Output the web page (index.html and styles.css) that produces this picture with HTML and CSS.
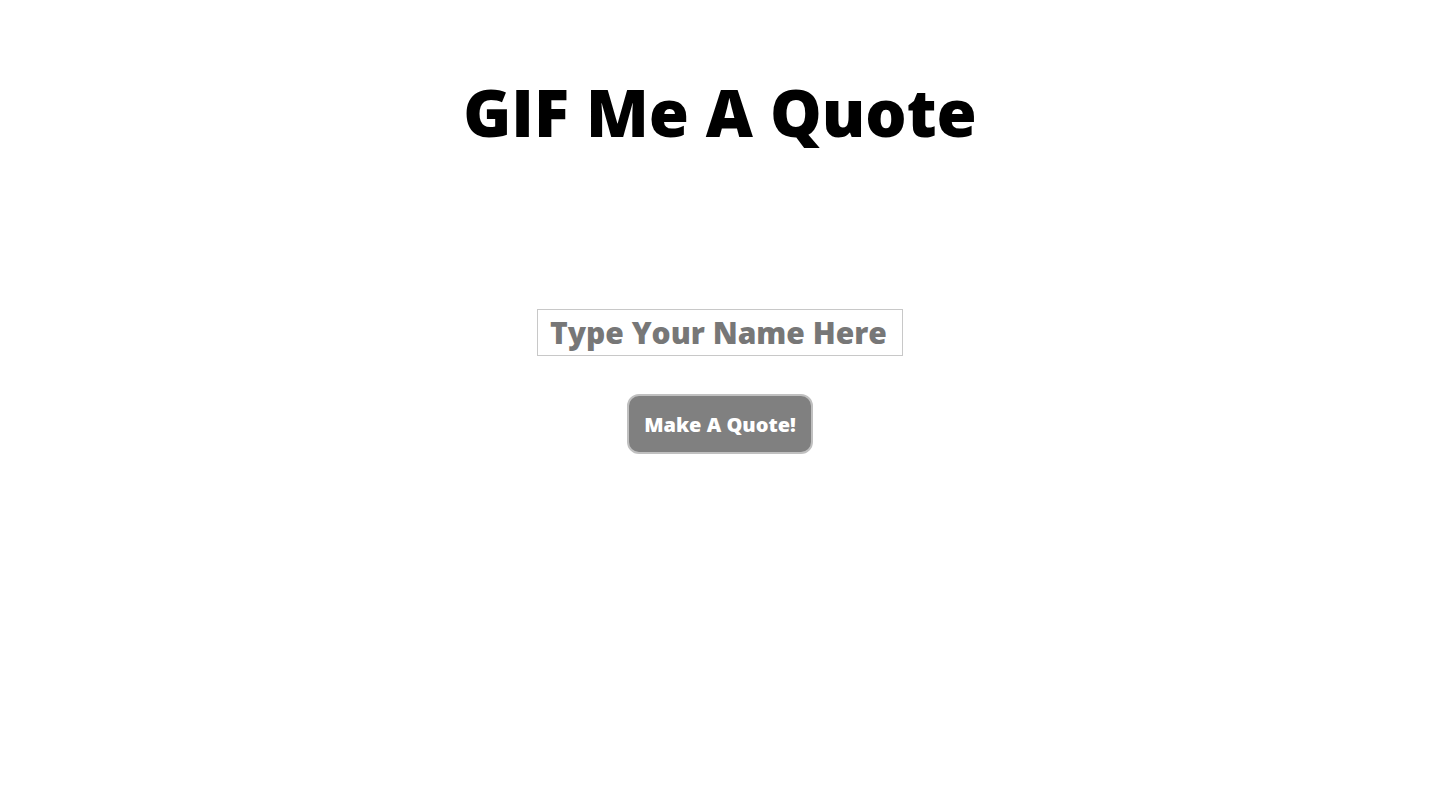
FILE: index.html
```html
<!DOCTYPE html>
<html>
<head>
<meta charset="utf-8">
<link rel="stylesheet" href="styles.css">
</head>
<body>
<main class="page">
  <h1 class="title">GIF Me A Quote</h1>
  <form class="quote-form">
    <input class="name-input" type="text" placeholder="Type Your Name Here">
    <button class="make-btn" type="button">Make A Quote!</button>
  </form>
</main>
</body>
</html>
```
FILE: styles.css
```css
html, body {
  margin: 0;
  padding: 0;
  background: #fff;
}
body {
  font-family: "Open Sans", "Liberation Sans", sans-serif;
}
.page {
  display: flex;
  flex-direction: column;
  align-items: center;
}
.title {
  margin: 72px 0 0;
  font-size: 65px;
  font-weight: 800;
  line-height: 80px;
  color: #000;
}
.quote-form {
  margin-top: 157px;
  display: flex;
  flex-direction: column;
  align-items: center;
}
.name-input {
  box-sizing: border-box;
  width: 366px;
  height: 47px;
  padding: 0 12px;
  border: 1px solid #c8c8c8;
  font-family: "Open Sans", "Liberation Sans", sans-serif;
  font-size: 30px;
  font-weight: 800;
  color: #333;
  outline: none;
}
.name-input::placeholder {
  color: #777;
  opacity: 1;
}
.make-btn {
  box-sizing: border-box;
  margin-top: 38px;
  width: 186px;
  height: 60px;
  background: #808080;
  border: 2px solid #c0c0c0;
  border-radius: 12px;
  font-family: "Open Sans", "Liberation Sans", sans-serif;
  font-size: 20px;
  font-weight: 800;
  color: #fff;
}
```
